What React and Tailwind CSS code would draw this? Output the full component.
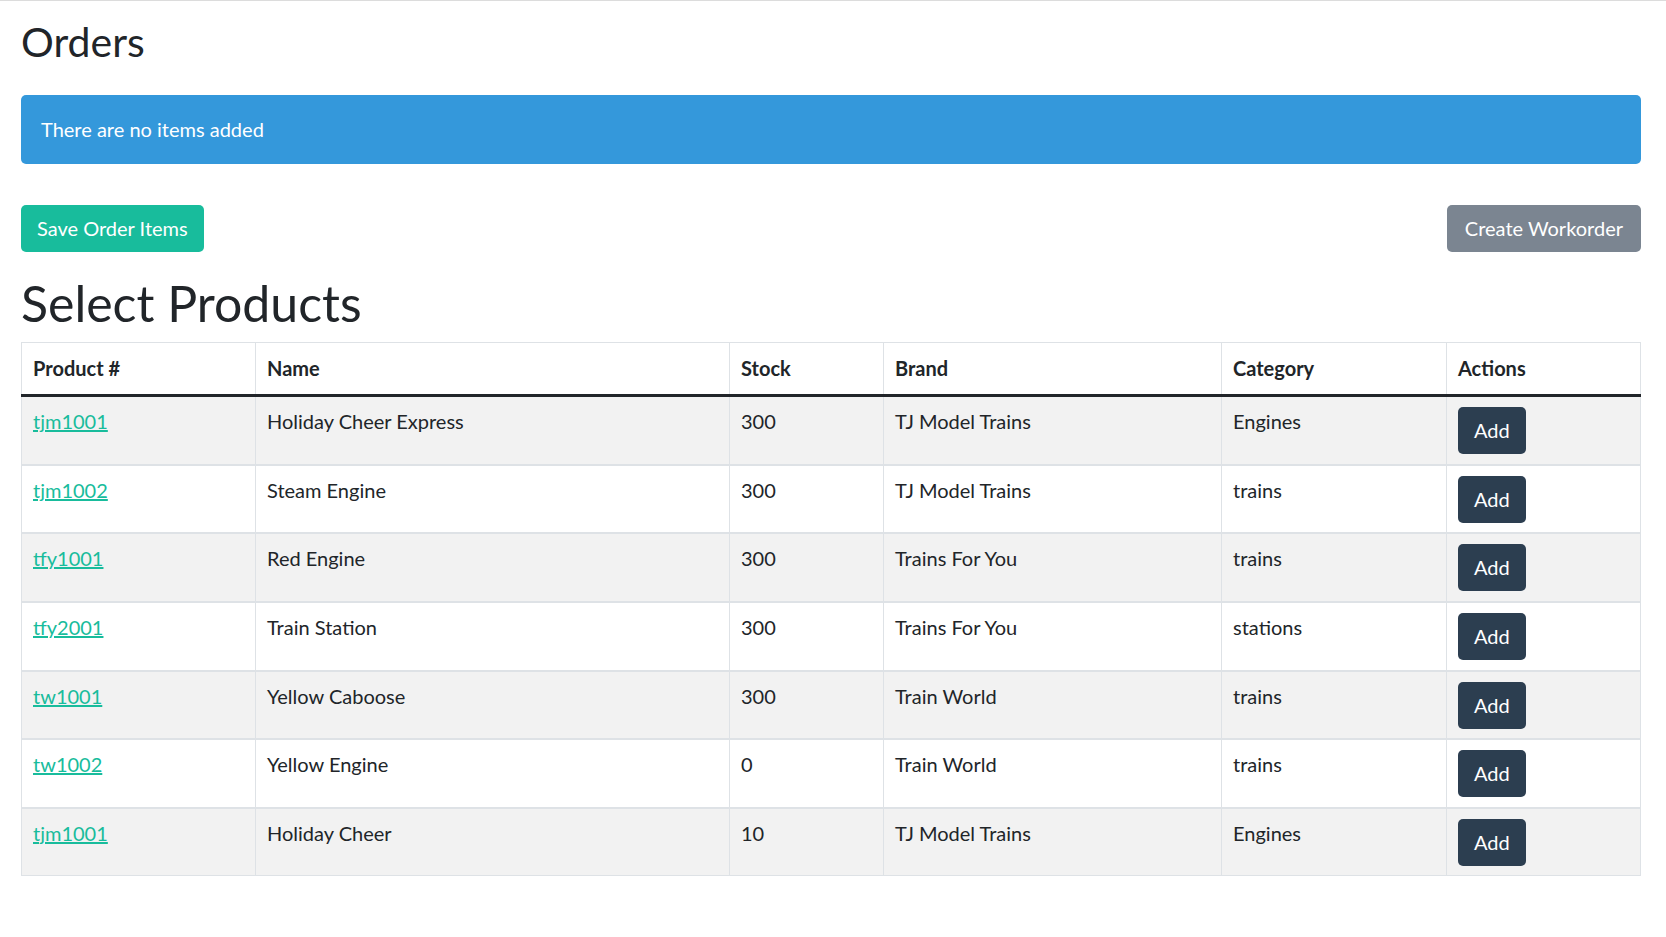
const products = [
  { sku: "tjm1001", name: "Holiday Cheer Express", stock: 300, brand: "TJ Model Trains", category: "Engines" },
  { sku: "tjm1002", name: "Steam Engine", stock: 300, brand: "TJ Model Trains", category: "trains" },
  { sku: "tfy1001", name: "Red Engine", stock: 300, brand: "Trains For You", category: "trains" },
  { sku: "tfy2001", name: "Train Station", stock: 300, brand: "Trains For You", category: "stations" },
  { sku: "tw1001", name: "Yellow Caboose", stock: 300, brand: "Train World", category: "trains" },
  { sku: "tw1002", name: "Yellow Engine", stock: 0, brand: "Train World", category: "trains" },
  { sku: "tjm1001", name: "Holiday Cheer", stock: 10, brand: "TJ Model Trains", category: "Engines" },
];

const columns = [
  { label: "Product #", width: "w-[234px]" },
  { label: "Name", width: "w-[474px]" },
  { label: "Stock", width: "w-[154px]" },
  { label: "Brand", width: "w-[338px]" },
  { label: "Category", width: "w-[225px]" },
  { label: "Actions", width: "" },
];

export default function App() {
  return (
    <main className="min-h-screen border-t border-[#dcdcdc] bg-white pl-[21px] pr-[25px] text-[20px] leading-[1.45] text-[#212529] font-['Lato','Liberation_Sans',sans-serif]">
      <h2 className="mt-[16px] text-[41px] font-normal leading-[1.2]">Orders</h2>

      <div className="mt-[29px] rounded-[5px] bg-[#3498db] px-5 py-5 text-white">
        There are no items added
      </div>

      <div className="mt-[41px] flex items-center justify-between">
        <button
          type="button"
          className="rounded-[5px] bg-[#18bc9c] px-[16px] py-[9px] text-white"
        >
          Save Order Items
        </button>
        <button
          type="button"
          className="rounded-[5px] bg-[#7b8591] px-[18px] py-[9px] text-white"
        >
          Create Workorder
        </button>
      </div>

      <h1 className="mt-[21px] text-[50px] font-normal leading-[1.2]">Select Products</h1>

      <table className="mt-[9px] w-full table-fixed border-collapse border border-[#dee2e6]">
        <thead>
          <tr className="border-b-[3px] border-b-[#212529]">
            {columns.map((col) => (
              <th
                key={col.label}
                className={`${col.width} border-x border-[#dee2e6] px-[11px] py-[11px] text-left font-bold`}
              >
                {col.label}
              </th>
            ))}
          </tr>
        </thead>
        <tbody>
          {products.map((p, i) => (
            <tr
              key={i}
              className={`border-t-2 border-[#dee2e6] align-top ${i % 2 === 0 ? "bg-[#f2f2f2]" : "bg-white"}`}
            >
              <td className="border-x border-[#dee2e6] px-[11px] pt-[10px]">
                <a href="#" className="text-[#18bc9c] underline">
                  {p.sku}
                </a>
              </td>
              <td className="border-x border-[#dee2e6] px-[11px] pt-[10px]">{p.name}</td>
              <td className="border-x border-[#dee2e6] px-[11px] pt-[10px]">{p.stock}</td>
              <td className="border-x border-[#dee2e6] px-[11px] pt-[10px]">{p.brand}</td>
              <td className="border-x border-[#dee2e6] px-[11px] pt-[10px]">{p.category}</td>
              <td className="border-x border-[#dee2e6] px-[11px] pt-[10px] pb-[9.6px]">
                <button
                  type="button"
                  className="rounded-[5px] bg-[#2c3e50] px-[16px] py-[9px] text-white"
                >
                  Add
                </button>
              </td>
            </tr>
          ))}
        </tbody>
      </table>
    </main>
  );
}
